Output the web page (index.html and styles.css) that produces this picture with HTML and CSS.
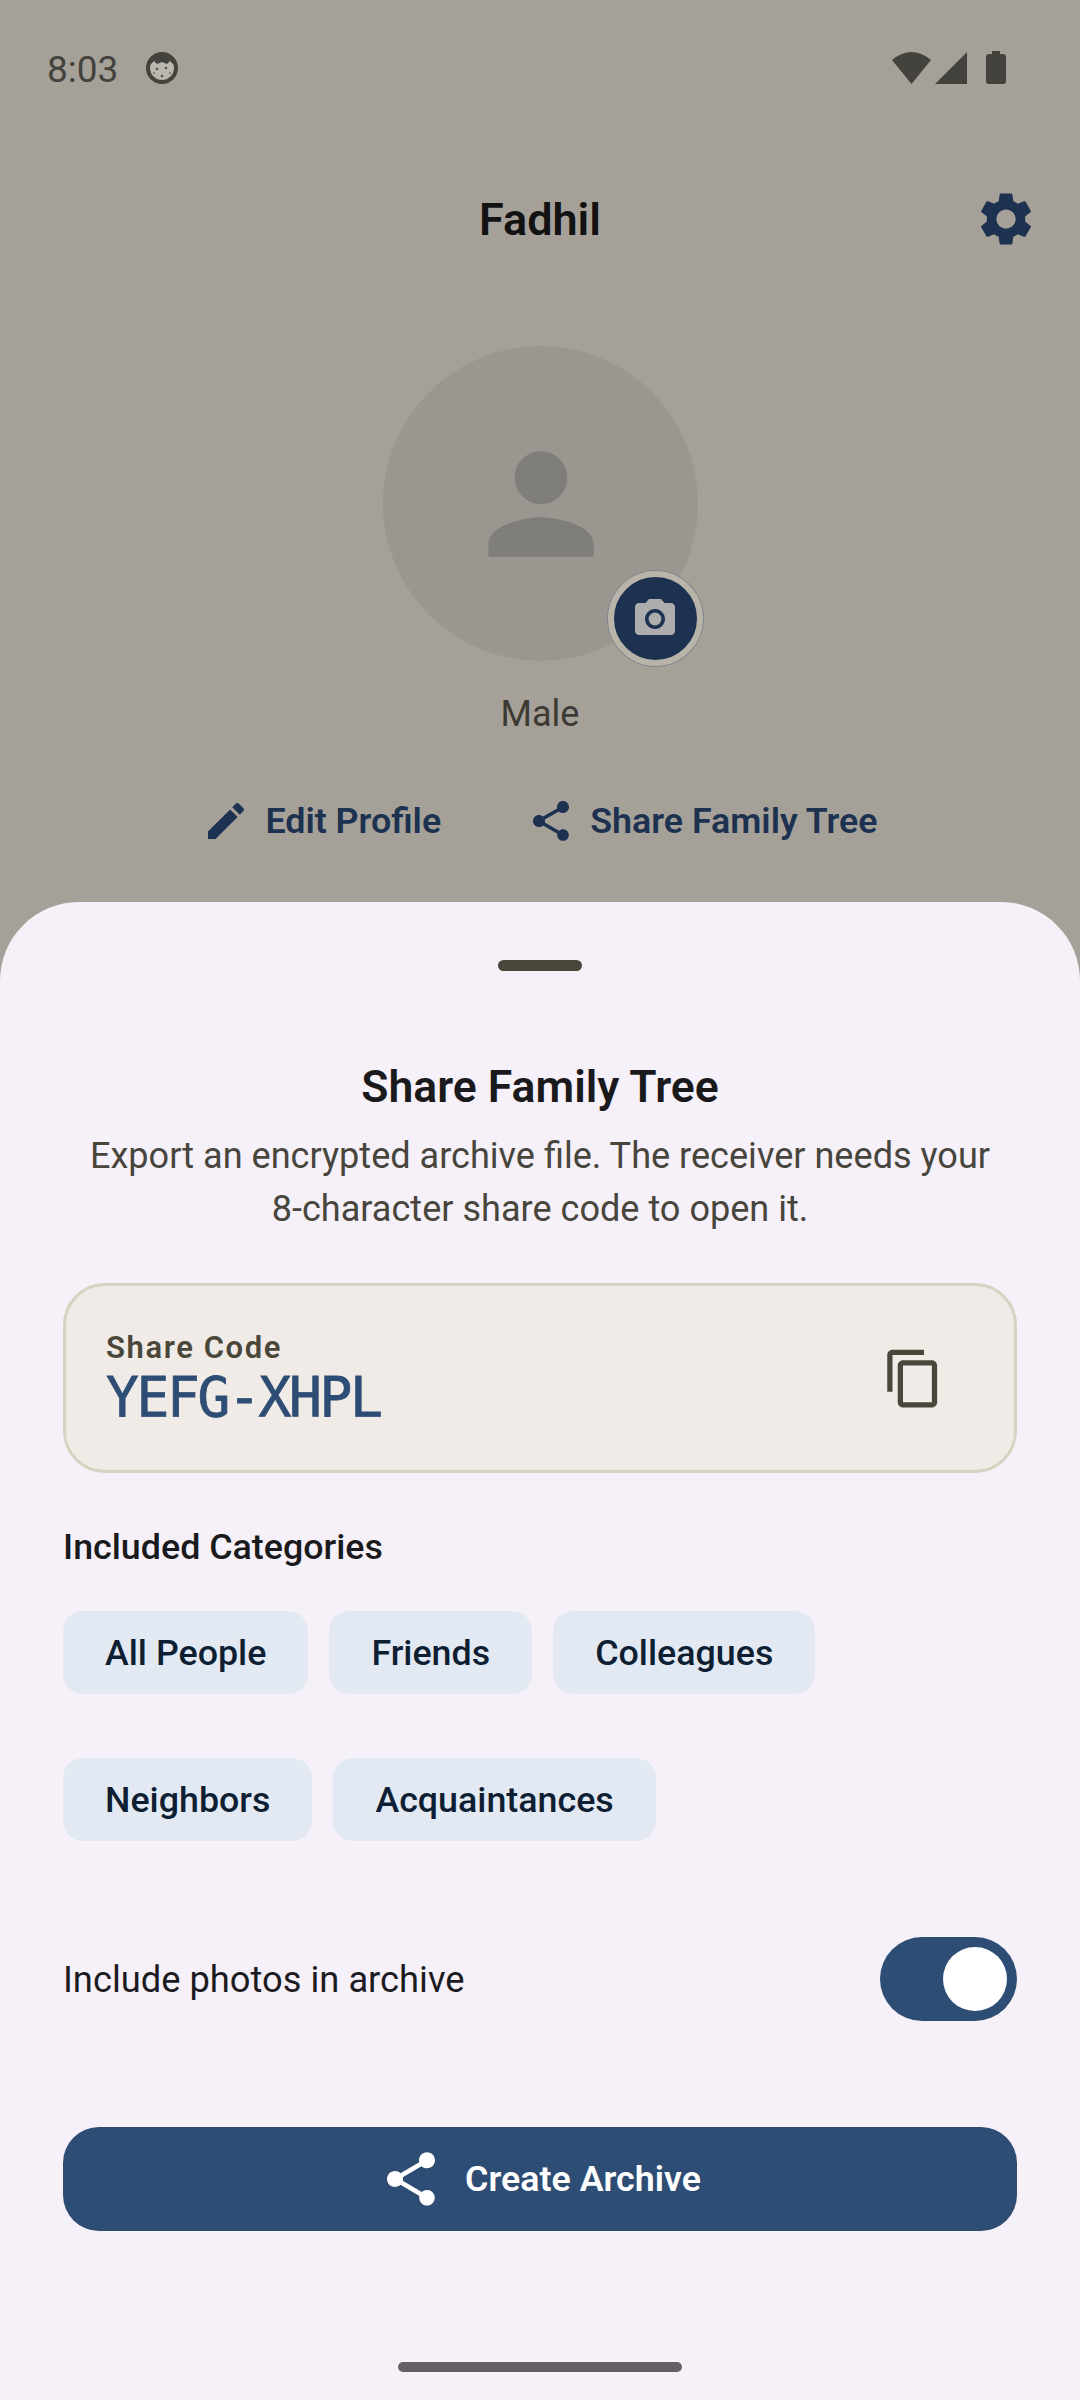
FILE: index.html
```html
<!DOCTYPE html>
<html lang="en">
<head>
    <meta charset="UTF-8">
    <meta name="viewport" content="width=device-width, initial-scale=1.0">
    <title>Fadhil</title>
    <link rel="stylesheet" href="styles.css">
</head>
<body>
    <!-- Profile screen, dimmed behind the sheet -->
    <div class="screen">
        <div class="status-bar">
            <span class="time">8:03</span>
            <svg class="status-face" viewBox="0 0 32 32">
                <circle cx="16" cy="16" r="14" fill="#bab7af" stroke="#44423c" stroke-width="4"/>
                <path d="M3 14C4 6 10 1 16 1s12 5 13 13l-5-5-3 3-5-2-5 2-3-3z" fill="#44423c"/>
                <circle cx="11" cy="17" r="1.300" fill="#55534c"/>
                <circle cx="20" cy="16" r="1.300" fill="#55534c"/>
                <circle cx="8" cy="21" r="1.100" fill="#7a7870"/>
                <circle cx="24" cy="21" r="1.100" fill="#7a7870"/>
                <circle cx="16" cy="24" r="1.300" fill="#55534c"/>
            </svg>
            <span class="status-right">
                <svg class="wifi" viewBox="0 0 39 32"><path d="M19.500 32L0 8Q19.500-8 39 8z"/></svg>
                <svg class="cell" viewBox="0 0 32 32"><path d="M32 0v32H0z"/></svg>
                <svg class="battery" viewBox="0 0 20 33"><path d="M6 0h8v3h3c2 0 3 1 3 3v24c0 2-1 3-3 3H3c-2 0-3-1-3-3V6c0-2 1-3 3-3h3z"/></svg>
            </span>
        </div>

        <div class="title-row">
            <h1 class="name">Fadhil</h1>
            <svg class="gear" viewBox="0 0 24 24"><path d="M19.14 12.94c.04-.3.06-.61.06-.94 0-.32-.02-.64-.07-.94l2.03-1.58c.18-.14.23-.41.12-.61l-1.920-3.320c-.12-.22-.37-.29-.59-.22l-2.390.96c-.5-.38-1.030-.7-1.620-.94l-.36-2.540c-.04-.24-.24-.41-.48-.41h-3.840c-.24 0-.43.17-.47.41l-.36 2.540c-.59.24-1.130.57-1.620.94l-2.390-.96c-.22-.08-.47 0-.59.22L2.740 8.870c-.12.21-.08.47.12.61l2.030 1.580c-.05.3-.09.63-.09.94s.02.64.07.94l-2.030 1.580c-.18.14-.23.41-.12.61l1.920 3.320c.12.22.37.29.59.22l2.390-.96c.5.38 1.030.7 1.620.94l.36 2.540c.05.24.24.41.48.41h3.840c.24 0 .44-.17.47-.41l.36-2.540c.59-.24 1.130-.56 1.620-.94l2.390.96c.22.08.47 0 .59-.22l1.920-3.320c.12-.22.07-.47-.12-.61l-2.010-1.580zM12 15.600c-1.980 0-3.600-1.620-3.600-3.600s1.620-3.600 3.600-3.600 3.600 1.620 3.600 3.600-1.620 3.600-3.600 3.600z"/></svg>
        </div>

        <div class="avatar">
            <svg class="avatar-person" viewBox="0 0 24 24"><path d="M12 12c2.210 0 4-1.790 4-4s-1.790-4-4-4-4 1.790-4 4 1.790 4 4 4zm0 2c-2.670 0-8 1.340-8 4v2h16v-2c0-2.660-5.330-4-8-4z"/></svg>
            <div class="camera-badge">
                <svg viewBox="0 0 24 24">
                    <path d="M9 2L7.170 4H4c-1.100 0-2 .9-2 2v12c0 1.100.9 2 2 2h16c1.100 0 2-.9 2-2V6c0-1.100-.9-2-2-2h-3.170L15 2H9zm3 15c-2.760 0-5-2.240-5-5s2.240-5 5-5 5 2.240 5 5-2.240 5-5 5z"/>
                    <circle cx="12" cy="12" r="3.200"/>
                </svg>
            </div>
        </div>
        <p class="gender">Male</p>

        <div class="profile-actions">
            <span class="action">
                <svg class="action-icon" viewBox="0 0 24 24"><path d="M3 17.250V21h3.750L17.810 9.940l-3.750-3.750L3 17.250zM20.710 7.040c.39-.39.39-1.020 0-1.410l-2.340-2.340c-.39-.39-1.020-.39-1.410 0l-1.830 1.830 3.750 3.750 1.830-1.830z"/></svg>
                Edit Profile
            </span>
            <span class="action">
                <svg class="action-icon" viewBox="0 0 24 24"><path d="M18 16.080c-.76 0-1.440.3-1.960.77L8.910 12.700c.05-.23.09-.46.09-.7s-.04-.47-.09-.7l7.050-4.110c.54.5 1.250.81 2.040.81 1.660 0 3-1.340 3-3s-1.340-3-3-3-3 1.340-3 3c0 .24.04.47.09.7L8.040 9.810C7.500 9.310 6.790 9 6 9c-1.660 0-3 1.340-3 3s1.340 3 3 3c.79 0 1.500-.31 2.040-.81l7.120 4.160c-.05.21-.08.43-.08.65 0 1.610 1.310 2.920 2.920 2.920 1.610 0 2.920-1.310 2.920-2.920s-1.310-2.920-2.920-2.920z"/></svg>
                Share Family Tree
            </span>
        </div>
    </div>

    <!-- Bottom sheet -->
    <div class="sheet">
        <div class="handle"></div>
        <h2 class="sheet-title">Share Family Tree</h2>
        <p class="sheet-desc">Export an encrypted archive file. The receiver needs your<br>8-character share code to open it.</p>

        <div class="code-card">
            <div class="code-text">
                <div class="code-label">Share Code</div>
                <div class="code-value">YEFG-XHPL</div>
            </div>
            <svg class="copy-icon" viewBox="0 0 24 24"><path d="M16 1H4c-1.100 0-2 .9-2 2v14h2V3h12V1zm3 4H8c-1.100 0-2 .9-2 2v14c0 1.100.9 2 2 2h11c1.100 0 2-.9 2-2V7c0-1.100-.9-2-2-2zm0 16H8V7h11v14z"/></svg>
        </div>

        <h3 class="section-label">Included Categories</h3>
        <div class="chips">
            <span class="chip">All People</span>
            <span class="chip">Friends</span>
            <span class="chip">Colleagues</span>
            <span class="chip">Neighbors</span>
            <span class="chip">Acquaintances</span>
        </div>

        <div class="photo-row">
            <span>Include photos in archive</span>
            <span class="toggle"><span class="toggle-knob"></span></span>
        </div>

        <div class="create-btn">
            <svg viewBox="0 0 24 24"><path d="M18 16.080c-.76 0-1.440.3-1.960.77L8.910 12.700c.05-.23.09-.46.09-.7s-.04-.47-.09-.7l7.050-4.110c.54.5 1.250.81 2.040.81 1.660 0 3-1.340 3-3s-1.340-3-3-3-3 1.340-3 3c0 .24.04.47.09.7L8.040 9.810C7.500 9.310 6.790 9 6 9c-1.660 0-3 1.340-3 3s1.340 3 3 3c.79 0 1.500-.31 2.040-.81l7.120 4.160c-.05.21-.08.43-.08.65 0 1.610 1.310 2.920 2.920 2.920 1.610 0 2.920-1.310 2.920-2.920s-1.310-2.920-2.920-2.920z"/></svg>
            Create Archive
        </div>

        <div class="home-bar"></div>
    </div>
</body>
</html>
```

FILE: styles.css
```css
/* Full-page settings */
html, body {
    margin: 0;
    padding: 0;
}

body {
    width: 1080px;
    height: 2400px;
    overflow: hidden;
    font-family: Roboto, sans-serif;
    background-color: #a5a199;
}

h1, h2, h3, p {
    margin: 0;
}

/* Dimmed profile screen */
.screen {
    height: 902px;
    display: flex;
    flex-direction: column;
    align-items: center;
}

.status-bar {
    width: 100%;
    box-sizing: border-box;
    height: 136px;
    padding: 2px 74px 0 47px;
    display: flex;
    align-items: center;
    color: #44423c;
}

.time {
    font-size: 37px;
    font-weight: 400;
    width: 99px;
}

.status-face {
    width: 32px;
    height: 32px;
    margin-bottom: 3px;
}

.status-right {
    margin-left: auto;
    margin-bottom: 3px;
    display: flex;
    align-items: center;
    fill: #44423c;
}

.wifi {
    width: 39px;
    height: 32px;
}

.cell {
    width: 32px;
    height: 32px;
    margin-left: 4px;
}

.battery {
    width: 20px;
    height: 33px;
    margin-left: 19px;
}

.title-row {
    width: 100%;
    box-sizing: border-box;
    padding: 0 42px;
    height: 166px;
    display: grid;
    grid-template-columns: 1fr auto 1fr;
    align-items: center;
}

.name {
    grid-column: 2;
    font-size: 45px;
    font-weight: 600;
    color: #121212;
}

.gear {
    grid-column: 3;
    justify-self: end;
    width: 64px;
    height: 64px;
    fill: #1d3150;
}

.avatar {
    position: relative;
    margin-top: 44px;
    width: 315px;
    height: 315px;
    border-radius: 50%;
    background-color: #9b9790;
    display: flex;
    align-items: center;
    justify-content: center;
}

.avatar-person {
    width: 158px;
    height: 158px;
    margin-left: 1px;
    fill: #7f7e7b;
}

.camera-badge {
    position: absolute;
    left: 225px;
    top: 225px;
    width: 83px;
    height: 83px;
    border-radius: 50%;
    background-color: #1d3150;
    border: 6px solid #b8b4a9;
    box-shadow: 0 0 0 1px #7f8590;
    display: flex;
    align-items: center;
    justify-content: center;
}

.camera-badge svg {
    width: 48px;
    height: 48px;
    fill: #adadad;
}

.gender {
    margin-top: 30px;
    font-size: 36px;
    line-height: 46px;
    color: #3c3a33;
}

.profile-actions {
    margin-top: 60px;
    display: flex;
    gap: 86px;
}

.action {
    display: flex;
    align-items: center;
    gap: 15px;
    font-size: 35.800px;
    font-weight: 600;
    color: #1d3150;
}

.action-icon {
    width: 48px;
    height: 48px;
    fill: #1d3150;
}

/* Bottom sheet */
.sheet {
    height: 1498px;
    box-sizing: border-box;
    padding: 58px 63px 0;
    border-radius: 79px 79px 0 0;
    background-color: #f6f1f9;
    display: flex;
    flex-direction: column;
}

.sheet > * {
    flex-shrink: 0;
}

.handle {
    align-self: center;
    width: 84px;
    height: 11px;
    border-radius: 6px;
    background-color: #4a473a;
}

.sheet-title {
    margin-top: 90px;
    text-align: center;
    font-size: 44.500px;
    line-height: 52px;
    font-weight: 600;
    color: #1a1a1c;
}

.sheet-desc {
    margin-top: 17px;
    text-align: center;
    font-size: 36.100px;
    line-height: 53px;
    color: #47453c;
}

.code-card {
    margin-top: 47px;
    height: 190px;
    box-sizing: border-box;
    padding: 0 69px 0 40px;
    border: 3px solid #d8d2c2;
    border-radius: 42px;
    background-color: #f0ebe6;
    display: flex;
    align-items: center;
    justify-content: space-between;
}

.code-text {
    padding-bottom: 4px;
}

.code-label {
    font-size: 31px;
    line-height: 36px;
    font-weight: 600;
    letter-spacing: 1.600px;
    margin-bottom: 5px;
    color: #4a473a;
}

.code-value {
    font-family: "DejaVu Sans Mono", monospace;
    font-size: 54.500px;
    line-height: 52px;
    letter-spacing: -2.300px;
    -webkit-text-stroke: 0.800px #2e4d75;
    color: #2e4d75;
}

.copy-icon {
    width: 63px;
    height: 63px;
    fill: #4a473a;
}

.section-label {
    margin-top: 52px;
    font-size: 35.800px;
    line-height: 44px;
    font-weight: 500;
    color: #1a1a1c;
}

.chips {
    margin-top: 42px;
    display: flex;
    flex-wrap: wrap;
    column-gap: 21px;
    row-gap: 64px;
}

.chip {
    height: 83px;
    box-sizing: border-box;
    padding: 0 42px;
    display: flex;
    align-items: center;
    border-radius: 20px;
    background-color: #e3e9f3;
    font-size: 35.800px;
    font-weight: 500;
    color: #0e1e33;
}

.photo-row {
    margin-top: 96px;
    display: flex;
    align-items: center;
    justify-content: space-between;
    font-size: 36.300px;
    color: #1c1b1f;
}

.toggle {
    width: 137px;
    height: 84px;
    box-sizing: border-box;
    padding: 10px;
    border-radius: 42px;
    background-color: #2e4d75;
    display: flex;
    justify-content: flex-end;
}

.toggle-knob {
    width: 64px;
    height: 64px;
    border-radius: 50%;
    background-color: #fff;
}

.create-btn {
    margin-top: 106px;
    height: 104px;
    border-radius: 36px;
    background-color: #2e4d75;
    display: flex;
    align-items: center;
    justify-content: center;
    gap: 22px;
    font-size: 35.800px;
    font-weight: 600;
    color: #fff;
}

.create-btn svg {
    width: 64px;
    height: 64px;
    fill: #fff;
}

.home-bar {
    align-self: center;
    margin-top: 131px;
    width: 284px;
    height: 10px;
    border-radius: 5px;
    background-color: #646166;
}
```
